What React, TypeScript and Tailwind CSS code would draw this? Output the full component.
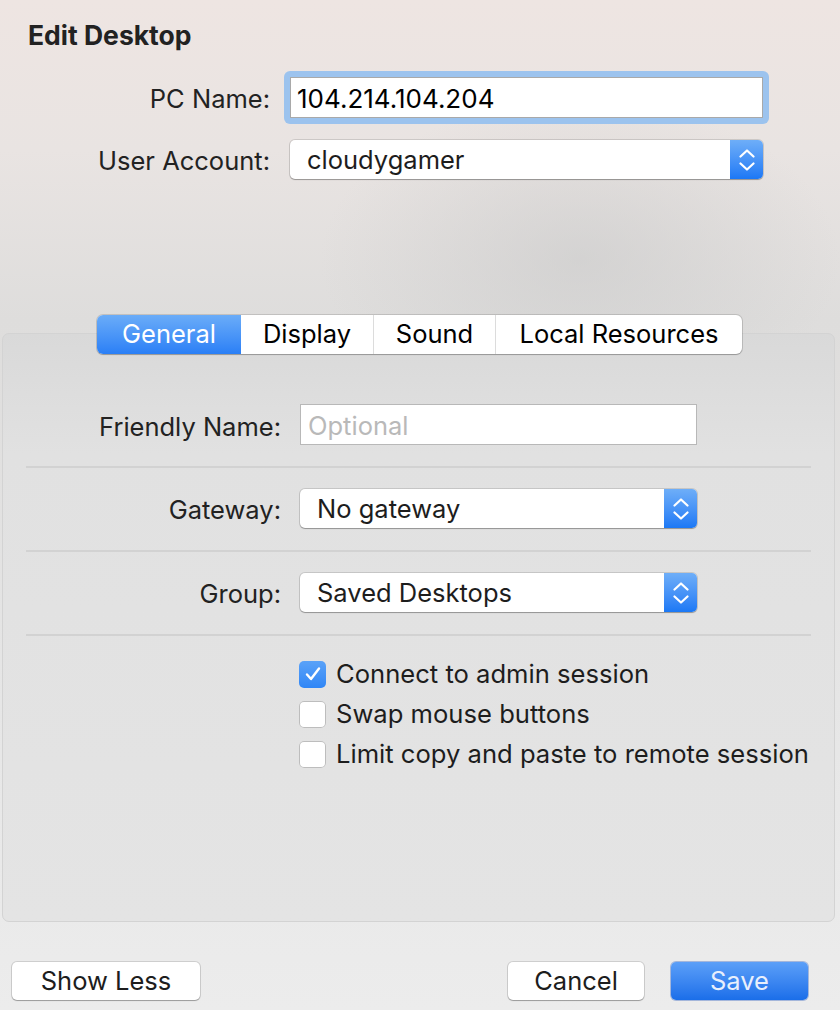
import React from "react";

const Stepper = () => (
  <div className="w-[33px] self-stretch rounded-r-[5px] bg-gradient-to-b from-[#6eaef8] to-[#1b78f5] flex items-center justify-center">
    <svg width="16" height="24" viewBox="0 0 16 24" fill="none">
      <polyline points="1.5,8.5 8,2.5 14.5,8.5" stroke="white" strokeWidth="2.2" strokeLinecap="round" strokeLinejoin="round" />
      <polyline points="1.5,15.5 8,21.5 14.5,15.5" stroke="white" strokeWidth="2.2" strokeLinecap="round" strokeLinejoin="round" />
    </svg>
  </div>
);

const Select = ({ value, w, h }: { value: string; w: string; h: string }) => (
  <div className={`${w} ${h} flex rounded-[5px] bg-white shadow-[0_0_0_1px_rgba(0,0,0,0.12),0_1px_1px_rgba(0,0,0,0.25)]`}>
    <div className="flex-1 flex items-center pl-[17px] pt-[1px] text-[25.5px] text-[#1d1d1d]">{value}</div>
    <Stepper />
  </div>
);

const Checkbox = ({ checked, label }: { checked?: boolean; label: string }) => (
  <div className="flex items-center h-[40px]">
    {checked ? (
      <div className="w-[27px] h-[27px] rounded-[5px] bg-gradient-to-b from-[#5aa2f8] to-[#2f86f6] flex items-center justify-center">
        <svg width="18" height="16" viewBox="0 0 18 16" fill="none">
          <polyline points="3,8.5 7,13 15,2.5" stroke="white" strokeWidth="2.4" strokeLinecap="round" strokeLinejoin="round" />
        </svg>
      </div>
    ) : (
      <div className="w-[27px] h-[27px] rounded-[5px] bg-white shadow-[inset_0_0_0_1px_#bdbdbd]" />
    )}
    <span className="ml-[10px] text-[25.6px] text-[#1d1d1d]">{label}</span>
  </div>
);

export default function App() {
  return (
    <div
      className="w-[840px] h-[1010px] flex flex-col overflow-hidden bg-[radial-gradient(ellipse_260px_160px_at_580px_260px,rgba(200,200,200,0.55),rgba(200,200,200,0)),linear-gradient(180deg,#eee5e2_0px,#e9e4e2_150px,#dedddc_320px,#e6e6e6_700px,#ececec_1010px)]"
      style={{ fontFamily: "Inter, 'Noto Sans', sans-serif" }}
    >
      <div className="pl-[28px] pt-[19px] text-[26.5px] font-bold leading-[32px] text-[#222]">Edit Desktop</div>

      <div className="mt-[26px] grid grid-cols-[270px_473px] gap-x-[20px] items-center">
        <div className="text-right text-[25.5px] translate-y-[2px] text-[#222]">PC Name:</div>
        <div className="rounded-[6px] bg-[#9cc3ee] p-[6px] -m-[6px]">
          <div className="h-[41px] bg-white shadow-[inset_0_0_0_1px_#a9a9a9] flex items-center pl-[7px] pt-[1px] text-[26px] text-black">
            104.214.104.204
          </div>
        </div>
      </div>

      <div className="mt-[22px] grid grid-cols-[270px_473px] gap-x-[20px] items-center">
        <div className="text-right text-[25.5px] translate-y-[2px] text-[#222]">User Account:</div>
        <Select value="cloudygamer" w="w-[473px]" h="h-[39px]" />
      </div>

      <div className="mt-[154px] ml-[2px] w-[833px] h-[589px] rounded-[7px] border border-[#d3d3d3] bg-[linear-gradient(180deg,#d9d9d9_0px,#e1e1e1_120px,#e4e4e4_589px)] flex flex-col">
        <div className="-mt-[19px] ml-[94px] w-[645px] h-[39px] flex rounded-[6px] bg-white shadow-[0_0_0_1px_rgba(0,0,0,0.13),0_1px_1px_rgba(0,0,0,0.2)] overflow-hidden text-[25.5px]">
          <div className="w-[144px] flex items-center justify-center bg-gradient-to-b from-[#6aacf8] to-[#2a7ff6] text-white">General</div>
          <div className="w-[133px] flex items-center justify-center text-black border-r border-[#dcdcdc]">Display</div>
          <div className="w-[122px] flex items-center justify-center text-black border-r border-[#dcdcdc]">Sound</div>
          <div className="flex-1 flex items-center justify-center text-black">Local Resources</div>
        </div>

        <div className="mt-[50px] grid grid-cols-[278px_397px] gap-x-[19px] items-center">
          <div className="text-right text-[25.5px] translate-y-[3px] text-[#222]">Friendly Name:</div>
          <div className="h-[41px] bg-white shadow-[inset_0_0_0_1px_#b8b8b8] flex items-center pl-[8px] pt-[4px] text-[25.5px] text-[#b9b9b9]">Optional</div>
        </div>

        <div className="mt-[21px] ml-[23px] w-[785px] h-[2px] bg-[#d2d2d2]" />

        <div className="mt-[21px] grid grid-cols-[278px_397px] gap-x-[19px] items-center">
          <div className="text-right text-[25.5px] translate-y-[2px] text-[#222]">Gateway:</div>
          <Select value="No gateway" w="w-[397px]" h="h-[39px]" />
        </div>

        <div className="mt-[22px] ml-[23px] w-[785px] h-[2px] bg-[#d2d2d2]" />

        <div className="mt-[21px] grid grid-cols-[278px_397px] gap-x-[19px] items-center">
          <div className="text-right text-[25.5px] translate-y-[2px] text-[#222]">Group:</div>
          <Select value="Saved Desktops" w="w-[397px]" h="h-[39px]" />
        </div>

        <div className="mt-[22px] ml-[23px] w-[785px] h-[2px] bg-[#d2d2d2]" />

        <div className="mt-[18px] ml-[296px] flex flex-col">
          <Checkbox checked label="Connect to admin session" />
          <Checkbox label="Swap mouse buttons" />
          <Checkbox label="Limit copy and paste to remote session" />
        </div>
      </div>

      <div className="mt-[40px] flex items-center px-[12px] text-[25.5px]">
        <div className="w-[188px] h-[38px] rounded-[5px] bg-white shadow-[0_0_0_1px_rgba(0,0,0,0.12),0_1px_1px_rgba(0,0,0,0.25)] flex items-center justify-center text-[#1d1d1d]">Show Less</div>
        <div className="ml-auto w-[136px] h-[38px] rounded-[5px] bg-white shadow-[0_0_0_1px_rgba(0,0,0,0.12),0_1px_1px_rgba(0,0,0,0.25)] flex items-center justify-center text-[#1d1d1d]">Cancel</div>
        <div className="ml-[27px] mr-[20px] w-[137px] h-[38px] rounded-[5px] bg-gradient-to-b from-[#5b9ff8] to-[#1a6ee9] shadow-[0_0_0_1px_rgba(0,60,180,0.3)] flex items-center justify-center text-[#e8effc]">Save</div>
      </div>
    </div>
  );
}
